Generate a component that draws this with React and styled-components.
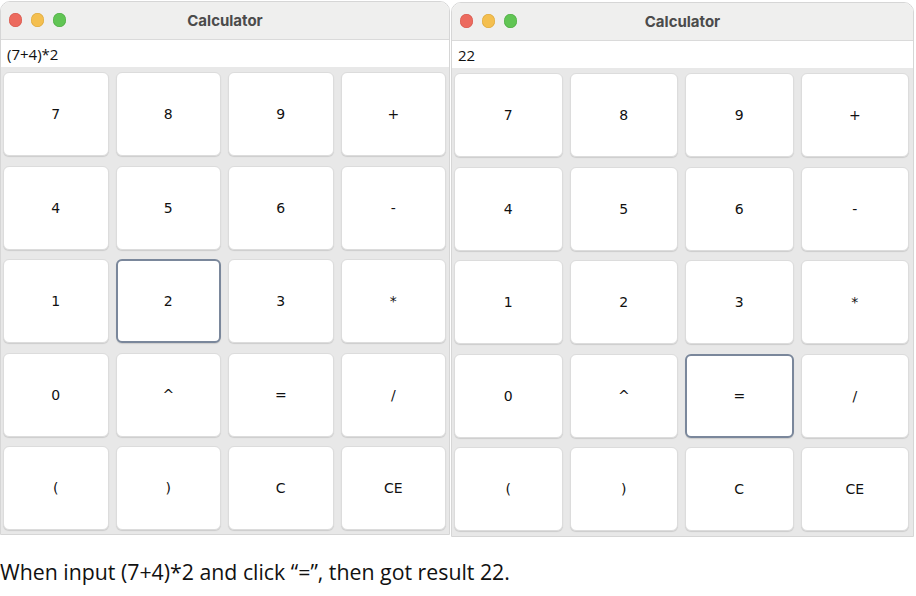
import styled, { createGlobalStyle } from 'styled-components'

const GlobalStyle = createGlobalStyle`
  html, body {
    margin: 0;
    padding: 0;
    background: #ffffff;
  }
  body {
    font-family: "Open Sans", "Liberation Sans", sans-serif;
  }
`

const keys = ['7', '8', '9', '+', '4', '5', '6', '-', '1', '2', '3', '*', '0', '^', '=', '/', '(', ')', 'C', 'CE']

const windows = [
  { id: 'before', display: '(7+4)*2', focused: '2', width: 450, top: 1, pad: '5px 3px 4px 2px' },
  { id: 'after', display: '22', focused: '=', width: 463, top: 2, pad: '5px 4px 5px 2px' },
]

function Calculator({ display, focused, width, top, pad }) {
  return (
    <Window $width={width} $top={top}>
      <TitleBar>
        <Lights>
          <Light $color="#ec6a5e" $edge="#d4574c" />
          <Light $color="#f4bf4f" $edge="#d9a53b" />
          <Light $color="#61c554" $edge="#4ea943" />
        </Lights>
        <Title>Calculator</Title>
      </TitleBar>
      <Display>{display}</Display>
      <Keypad $pad={pad}>
        {keys.map((k) => (
          <Key key={k} $focused={k === focused}>{k}</Key>
        ))}
      </Keypad>
    </Window>
  )
}

export default function App() {
  return (
    <>
      <GlobalStyle />
      <Page>
        <Windows>
          {windows.map((w) => (
            <Calculator key={w.id} {...w} />
          ))}
        </Windows>
        <Caption>When input (7+4)*2 and click “=”, then got result 22.</Caption>
      </Page>
    </>
  )
}

const Page = styled.div`
  width: 916px;
  height: 596px;
  display: flex;
  flex-direction: column;
`

const Windows = styled.div`
  display: flex;
  gap: 1px;
  align-items: flex-start;
`

const Window = styled.div`
  width: ${(p) => p.$width}px;
  margin-top: ${(p) => p.$top}px;
  display: flex;
  flex-direction: column;
  border: 1px solid #d6d6d6;
  border-top-left-radius: 10px;
  border-top-right-radius: 10px;
  overflow: hidden;
  box-sizing: border-box;
`

const TitleBar = styled.div`
  height: 37px;
  background: #efefee;
  border-bottom: 1px solid #dadada;
  display: flex;
  align-items: center;
  justify-content: center;
  position: relative;
`

const Lights = styled.div`
  position: absolute;
  left: 8px;
  top: 11px;
  display: flex;
  gap: 9px;
`

const Light = styled.span`
  width: 13px;
  height: 14px;
  border-radius: 50%;
  background: ${(p) => p.$color};
  box-shadow: inset 0 0 0 0.5px ${(p) => p.$edge};
`

const Title = styled.div`
  font-family: "Inter", "Liberation Sans", sans-serif;
  font-weight: 700;
  font-size: 15px;
  color: #4b4b4b;
`

const Display = styled.div`
  height: 27px;
  background: #ffffff;
  display: flex;
  align-items: center;
  padding-left: 6px;
  font-family: "Open Sans", "Liberation Sans", sans-serif;
  font-size: 15px;
  font-weight: 500;
  color: #111111;
`

const Keypad = styled.div`
  background: #e8e8e8;
  padding: ${(p) => p.$pad};
  display: grid;
  grid-template-columns: repeat(4, 1fr);
  grid-auto-rows: 84px;
  column-gap: 7px;
  row-gap: 9.5px;
`

const Key = styled.div`
  background: #ffffff;
  border-radius: 6px;
  box-sizing: border-box;
  border: ${(p) => (p.$focused ? '2px solid #7a879b' : '1px solid #dcdcdc')};
  box-shadow: 0 1px 1px rgba(0, 0, 0, 0.12);
  display: flex;
  align-items: center;
  justify-content: center;
  font-family: "DejaVu Sans", "Liberation Sans", sans-serif;
  font-size: 14px;
  color: #111111;
`

const Caption = styled.div`
  margin-top: 20px;
  font-family: "Open Sans", "Liberation Sans", sans-serif;
  font-size: 21.3px;
  color: #111111;
`
